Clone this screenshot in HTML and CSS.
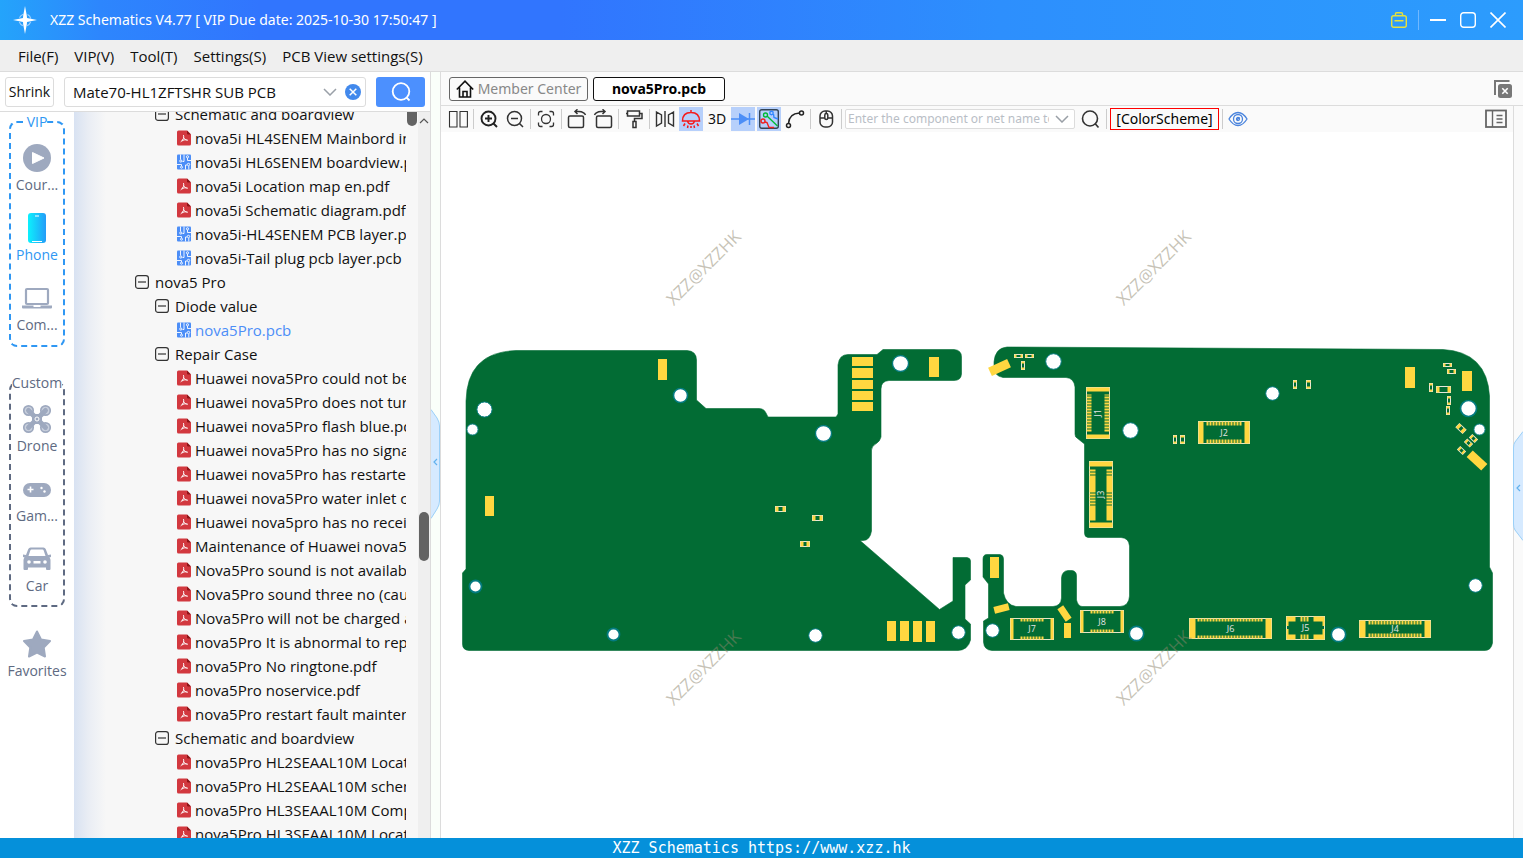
FILE: index.html
```html
<!DOCTYPE html>
<html lang="en">
<head>
<meta charset="utf-8">
<title>XZZ Schematics</title>
<link rel="stylesheet" href="styles.css">
</head>
<body>
<svg class="defs" aria-hidden="true">
  <symbol id="i-pdf" viewBox="0 0 14 16"><path d="M1.5 0.500H10L14 4.500V14Q14 15.500 12.500 15.500H1.500Q0 15.500 0 14V2Q0 .5 1.500 .5Z" fill="#d2383f"/><path d="M10 .5V3.500Q10 4.500 11 4.500H14Z" fill="#8d1519"/><path d="M6.600 5.500C7.300 7.500 6.500 9.500 4 11.600M6.900 8C7.500 9.300 8.800 10 10.500 10.200M5.200 10.800C6.500 9.800 8 9.600 9.300 9.900" fill="none" stroke="#fff" stroke-width="1" stroke-linecap="round"/></symbol>
  <symbol id="i-pcb" viewBox="0 0 14 16"><rect y=".5" width="14" height="15" rx="1" fill="#4c8ef7"/><g fill="none" stroke="#fff" stroke-width=".9"><path d="M3.500 .5V5.500M7 .5V7.500H5.500M10.500 4V6.500H14M0 10.500H4.500V12M8.500 15.500V11H10M11.800 15.500V12"/><circle cx="3.800" cy="7" r="1.100"/><circle cx="10.500" cy="2.800" r="1.100"/><circle cx="11.500" cy="10.500" r="1.200"/><circle cx="4.500" cy="13.200" r="1"/></g></symbol>
  <symbol id="i-minus" viewBox="0 0 14 14"><rect x=".6" y=".6" width="12.800" height="12.800" rx="2.500" fill="none" stroke="#333" stroke-width="1.200"/><path d="M3 7H11" stroke="#333" stroke-width="1.200"/></symbol>
</svg>
<div class="app">
  <header class="titlebar">
    <svg class="logo" viewBox="0 0 24 28"><circle cx="12" cy="14" r="6" fill="none" stroke="#bdf" stroke-width="1.200" stroke-dasharray="5 4.400" stroke-dashoffset="-2" opacity=".8"/><path d="M12 0L13.800 9.500L14 12L24 14L14 16L13.800 18.500L12 28L10.200 18.500L10 16L0 14L10 12L10.200 9.500Z" fill="#fff"/></svg>
    <h1>XZZ Schematics V4.77 [ VIP Due date: 2025-10-30 17:50:47 ]</h1>
    <div class="window-actions">
      <button class="plain" aria-label="Toolbox"><svg width="16" height="16" viewBox="0 0 16 16" fill="none" stroke="#e6e13c" stroke-width="1.400"><rect x=".7" y="3.700" width="14.600" height="11.600" rx="2"/><path d="M4.500 3.500V1.800Q4.500 .7 5.600 .7H10.400Q11.500 .7 11.500 1.800V3.500M3.500 8.700H12.500"/></svg></button>
      <span class="window-divider"></span>
      <button class="plain" aria-label="Minimize"><svg width="16" height="16"><path d="M0 8H16" stroke="#fff" stroke-width="2"/></svg></button>
      <button class="plain" aria-label="Maximize"><svg width="16" height="16"><rect x=".7" y=".7" width="14.600" height="14.600" rx="3" fill="none" stroke="#fff" stroke-width="1.400"/></svg></button>
      <button class="plain" aria-label="Close"><svg width="16" height="16"><path d="M.5 .5L15.500 15.500M15.500 .5L.5 15.500" stroke="#fff" stroke-width="1.600"/></svg></button>
    </div>
  </header>
  <nav class="menubar">
    <button>File(F)</button><button>VIP(V)</button><button>Tool(T)</button><button>Settings(S)</button><button>PCB View settings(S)</button>
  </nav>
  <main class="workspace">
    <section class="browser">
      <form class="search-row">
        <button type="button" class="shrink">Shrink</button>
        <div class="combo">
          <input type="text" aria-label="Search model" value="Mate70-HL1ZFTSHR SUB PCB">
          <svg width="14" height="8" viewBox="0 0 14 8"><path d="M1 1L7 7L13 1" fill="none" stroke="#9aa0a8" stroke-width="1.500"/></svg>
          <button type="button" class="plain" aria-label="Clear"><svg width="16" height="16"><circle cx="8" cy="8" r="8" fill="#4289ec"/><path d="M4.700 4.700L11.300 11.300M11.300 4.700L4.700 11.300" stroke="#fff" stroke-width="1.500"/></svg></button>
        </div>
        <button type="button" class="search-button" aria-label="Search"><svg width="20" height="20" fill="none" stroke="#fff" stroke-width="1.800"><circle cx="10" cy="9.500" r="8.300"/><path d="M15.500 15.500L18.500 18.500"/></svg></button>
      </form>
      <div class="browser-body">
        <aside class="categories">
          <fieldset class="group vip"><legend>VIP</legend>
            <button><svg viewBox="0 0 28 30"><circle cx="14" cy="15" r="14" fill="#9ea9bf"/><path d="M9.500 9.500V20.500L21 15Z" fill="#fff" stroke="#fff" stroke-width="1" stroke-linejoin="round"/></svg><span>Cour...</span></button>
            <button class="active"><svg viewBox="0 0 28 30"><defs><linearGradient id="pg"><stop stop-color="#0cf1fd"/><stop offset="1" stop-color="#249cf8"/></linearGradient></defs><rect x="5" y="0" width="18" height="30" rx="3" fill="url(#pg)"/><path d="M12 3H16M9 28.500H19" stroke="#fff" stroke-width="1.200"/></svg><span>Phone</span></button>
            <button><svg viewBox="0 0 30 30" class="wide"><rect x="4" y="6" width="22" height="15" fill="none" stroke="#9ea9bf" stroke-width="2.200" rx="1"/><path d="M0 22.500H11.500V24H18.500V22.500H30V24.500Q30 25.500 29 25.500H1Q0 25.500 0 24.500Z" fill="#9ea9bf"/></svg><span>Com...</span></button>
          </fieldset>
          <fieldset class="group custom"><legend>Custom</legend>
            <button><svg viewBox="0 0 28 30"><g fill="none" stroke="#9ea9bf"><g fill="#c9d0dd" stroke-width="1.700"><circle cx="5.500" cy="6.500" r="4.700"/><circle cx="22.500" cy="6.500" r="4.700"/><circle cx="5.500" cy="23.500" r="4.700"/><circle cx="22.500" cy="23.500" r="4.700"/></g><path d="M5.500 6.500L22.500 23.500M22.500 6.500L5.500 23.500" stroke-width="5" stroke-linecap="round"/></g><rect x="9" y="10" width="10" height="10" rx="2" fill="#9ea9bf"/><circle cx="14" cy="15" r="2" fill="#9ea9bf" stroke="#fff"/></svg><span>Drone</span></button>
            <button><svg viewBox="0 0 28 30"><rect y="9" width="28" height="14" rx="7" fill="#9ea9bf"/><path d="M4.500 15.500H10.500M7.500 12.500V18.500" stroke="#fff" stroke-width="1.600"/><circle cx="18.500" cy="14" r="1.200" fill="#fff"/><circle cx="21.500" cy="17.500" r="1.200" fill="#fff"/></svg><span>Gam...</span></button>
            <button><svg viewBox="0 0 28 30"><path d="M7.500 3.500H20.500Q22 3.500 22.700 5L25 11L28 10.500V13L26.500 13.500Q27.500 14.500 27.500 16V25Q27.500 26 26.500 26H24Q23 26 23 25V23.500H5V25Q5 26 4 26H1.500Q.5 26 .5 25V16Q.5 14.500 1.500 13.500L0 13V10.500L3 11L5.300 5Q6 3.500 7.500 3.500Z" fill="#9ea9bf"/><path d="M8.500 5.500H19.500Q20.300 5.500 20.700 6.500L22.500 12H5.500L7.300 6.500Q7.700 5.500 8.500 5.500ZM10.500 17H17.500V19.500H10.500Z" fill="#fff"/><circle cx="6" cy="18" r="1.800" fill="#fff"/><circle cx="22" cy="18" r="1.800" fill="#fff"/></svg><span>Car</span></button>
          </fieldset>
          <button class="favorites"><svg viewBox="0 0 28 30"><path d="M14 2.500L18 10.500L27 12L20.700 18.500L22 27.500L14 23.500L6 27.500L7.300 18.500L1 12L10 10.500Z" fill="#9ea9bf" stroke="#9ea9bf" stroke-width="2" stroke-linejoin="round"/></svg><span>Favorites</span></button>
        </aside>
        <div class="tree-pane">
          <div class="tree-clip"><ul class="tree" id="tree"></ul></div>
          <div class="outer-scroll"><span></span></div>
          <div class="inner-scroll"><svg width="10" height="6"><path d="M1 5L5 1L9 5" fill="none" stroke="#555" stroke-width="1.200"/></svg><span></span></div>
        </div>
      </div>
    </section>
    <div class="splitter"><button class="fold fold-left" aria-label="Collapse file list"><svg width="9" height="110" viewBox="0 0 9 110"><path d="M0 .5L6 9Q8.500 13 8.500 17V92Q8.500 96 6 100L0 109.500" fill="#d6eaff" stroke="#9bd0f8"/><path d="M6 50L3 53L6 56" fill="none" stroke="#62b2ee" stroke-width="1.200"/></svg></button></div>
    <section class="viewer">
      <div class="tabs">
        <button class="tab member"><svg width="18" height="18" fill="none" stroke="#111" stroke-width="1.600"><path d="M.8 9.500L9 1.200L17.200 9.500M3.500 7.500V17H14.500V7.500M7 17V11.500H11V17"/></svg>Member Center</button>
        <button class="tab current">nova5Pro.pcb</button>
        <button class="plain close-all" aria-label="Close all tabs"><svg width="18" height="18"><path d="M1 15V1H15.500" fill="none" stroke="#777" stroke-width="2"/><rect x="4" y="4" width="14" height="14" rx="2.500" fill="#777"/><path d="M8.300 8.300L13.700 13.700M13.700 8.300L8.300 13.700" stroke="#fff" stroke-width="1.600"/></svg></button>
      </div>
      <div class="stage">
        <div class="stage-main">
          <div class="toolbar">
            <button aria-label="Split view"><svg width="20" height="20" fill="none" stroke="#333" stroke-width="1.100"><path d="M1.500 2.500H9V18H1.500ZM12 2.500H19.400V18H12Z"/></svg></button><i></i>
            <button aria-label="Zoom in"><svg width="20" height="20" fill="none" stroke="#222" stroke-width="1.900"><circle cx="9.500" cy="9.500" r="7"/><path d="M14.500 14.500L18 18M6 9.500H13M9.500 6V13"/></svg></button>
            <button aria-label="Zoom out"><svg width="20" height="20" fill="none" stroke="#333" stroke-width="1.500"><circle cx="9.500" cy="9.500" r="7"/><path d="M14.500 14.500L18 18M6 9.500H13"/></svg></button><i></i>
            <button aria-label="Fit"><svg width="20" height="20" fill="none" stroke="#333" stroke-width="1.300"><path d="M2.500 6.500V4.500Q2.500 2.500 4.500 2.500H6.500M13.500 2.500H15.500Q17.500 2.500 17.500 4.500V6.500M17.500 13.500V15.500Q17.500 17.500 15.500 17.500H13.500M6.500 17.500H4.500Q2.500 17.500 2.500 15.500V13.500"/><circle cx="10" cy="10" r="4.500"/></svg></button><i></i>
            <button aria-label="Rotate left"><svg width="20" height="20" fill="none" stroke="#333" stroke-width="1.500"><rect x="1.500" y="7" width="15" height="11.500" rx="1.500"/><path d="M18.500 6Q17 2.800 12 2.500H8M10.500 .3L8 2.500L10.500 5"/></svg></button>
            <button aria-label="Rotate right"><svg width="20" height="20" fill="none" stroke="#333" stroke-width="1.500"><rect x="3.500" y="7" width="15" height="11.500" rx="1.500"/><path d="M1.500 6Q3 2.800 8 2.500H12M9.500 .3L12 2.500L9.500 5"/></svg></button><i></i>
            <button aria-label="Paint"><svg width="20" height="20" fill="none" stroke="#333" stroke-width="1.500"><path d="M3.500 2H15.500V7H3.500ZM15.500 4.500H18V9.500H10.500V12.500M3.500 4.500H2"/><rect x="9" y="12.500" width="3" height="6"/></svg></button><i></i>
            <button aria-label="Mirror"><svg width="20" height="20" fill="none" stroke="#333" stroke-width="1.400"><path d="M1.500 3L6.500 6V14L1.500 17ZM18.500 3L13.500 6V14L18.500 17ZM10 2V18"/></svg></button>
            <button class="on" aria-label="Lamp"><svg width="20" height="20" fill="none" stroke="#f51a1a" stroke-width="1.500"><path d="M10 1V3.500M1.500 12Q1.500 3.500 10 3.500T18.500 12ZM6.500 12Q7 15 10 15T13.500 12M4 14.500L2.500 17M16 14.500L17.500 17M7 16.500L6.500 19M13 16.500L13.500 19M10 17V19"/></svg></button>
            <button class="text-tool">3D</button>
            <button class="on" aria-label="Diode"><svg width="24" height="20"><path d="M0 10H24M18.500 4V16" stroke="#4c8ef7" stroke-width="1.500"/><path d="M8 4L18 10L8 16Z" fill="#4c8ef7"/></svg></button>
            <button class="on" aria-label="Nets"><svg width="20" height="20" fill="none" stroke-width="1.400"><rect x=".7" y=".7" width="18.600" height="18.600" rx="2" stroke="#345"/><path d="M8 7L18.500 17" stroke="#0b3"/><circle cx="6.500" cy="6" r="2" stroke="#0b3"/><path d="M14.500 5L15 8.500L19 10" stroke="#38f"/><circle cx="12.500" cy="4" r="1.700" stroke="#38f"/><path d="M6 13L8 13.500L10 18.500H15" stroke="#e22"/><circle cx="4" cy="12" r="2" stroke="#e22"/></svg></button>
            <button aria-label="Trace"><svg width="20" height="20" fill="none" stroke="#222" stroke-width="1.500"><circle cx="3.500" cy="16.500" r="2"/><circle cx="16.500" cy="4" r="2"/><path d="M3.500 14.500Q4 4.500 14.500 4"/></svg></button><i></i>
            <button aria-label="Mouse"><svg width="20" height="20" fill="none" stroke="#333" stroke-width="1.500"><rect x="4" y="2" width="12.500" height="16" rx="5"/><path d="M4 9H16.500M10.250 2V5"/><rect x="8.800" y="4.500" width="3" height="6" rx="1.500" fill="#fafafa"/></svg></button><i></i>
            <div class="net-search"><input type="text" aria-label="Component or net name" placeholder="Enter the component or net name to search"><svg width="14" height="8" viewBox="0 0 14 8"><path d="M1 1L7 7L13 1" fill="none" stroke="#999fa6" stroke-width="1.500"/></svg></div>
            <button aria-label="Find"><svg width="20" height="20" fill="none" stroke="#333" stroke-width="1.600"><circle cx="9" cy="9.500" r="7.500"/><path d="M14 14.500L17.500 18.500"/></svg></button><i></i>
            <button class="scheme">[ColorScheme]</button><i></i>
            <button aria-label="Show"><svg width="20" height="20" fill="none" stroke="#4a84dd" stroke-width="1.300"><path d="M1 10Q5 3.500 10 3.500T19 10Q15 16.500 10 16.500T1 10Z"/><circle cx="10" cy="10" r="4.500"/><path d="M8.500 11L11.500 8.500"/><circle cx="10" cy="10" r="1.500"/></svg></button>
            <button class="side-toggle" aria-label="Side panel"><svg width="22" height="20" fill="none" stroke="#666"><rect x="1" y="1.500" width="20" height="16.500" stroke-width="1.800"/><path d="M7.500 2V18M11.500 6.500H17.500M11.500 10H17.500M11.500 13.500H17.500" stroke-width="1.400"/></svg></button>
          </div>
          <div class="canvas">
            <svg id="board" viewBox="441 132 1072 706" role="img" aria-label="nova5Pro board view">
              <g fill="#026c34" stroke="#026c34" stroke-width=".6">
                <path d="M516 350.500H687Q696.500 351 696.500 360V400L706 408.500H759Q764 408.500 766 413L768 417H836L838 414V365Q839 354.500 848 354.500H877L883 349.500H954Q961.500 350 961.500 357V374Q961 380.500 954 380.500H889Q881 381 881 389V437Q880 441 877 443Q871.500 446 871.500 450V531Q870 540.500 863 540.500H860L939.500 609.500L953 601V557.500H967Q970.500 558 970.500 561V580L965 585V619L970.500 624V640Q968 650 958 650.500H469Q462.500 650 462.500 644V573L466 569V401Q467 352 516 350.500Z"/>
                <path d="M1007 347L1443 349.500Q1487 352 1489.500 396V567L1492.500 573V643Q1491 651 1484 650.500H992Q984 650 983.500 642V621L988.500 618V584L983 577V559Q983 554.500 987 554.500H1000Q1003.500 555 1003.500 559V593Q1006 605 1016 606.500H1053Q1061 606 1061.500 598V578Q1062 571 1068 570.500H1072Q1076.500 571 1076.500 576V600Q1078 606 1082 606.500H1120Q1129 606 1129.500 596V546Q1129 538 1121 537.500H1088Q1084.500 537 1084.500 533V444L1077 438Q1075 437 1075 434V387Q1074 378 1066 377.500H1003Q994 376 994 367V362Q995 348 1007 347Z"/>
              </g>
              <g id="holes" fill="#fff" stroke="#047b80"></g>
              <g id="pads" fill="#ffd740"></g>
              <g id="chips"></g>
              <g id="connectors"></g>
              <g class="mark"><text transform="translate(708 272) rotate(-45)">XZZ@XZZHK</text><text transform="translate(1158 272) rotate(-45)">XZZ@XZZHK</text><text transform="translate(708 672) rotate(-45)">XZZ@XZZHK</text><text transform="translate(1158 672) rotate(-45)">XZZ@XZZHK</text></g>
            </svg>
          </div>
        </div>
        <div class="right-strip"><button class="fold fold-right" aria-label="Expand panel"><svg width="10" height="110" viewBox="0 0 10 110"><path d="M10 .5L2 11Q.5 13 .5 17V93Q.5 97 2 99L10 109.500" fill="#d6eaff" stroke="#9bd0f8"/><path d="M7 54L4 57L7 60" fill="none" stroke="#62b2ee" stroke-width="1.200"/></svg></button></div>
      </div>
    </section>
  </main>
  <footer class="statusbar">XZZ Schematics https://www.xzz.hk</footer>
</div>
<script src="app.js"></script>
</body>
</html>
```
FILE: styles.css
```css
* { box-sizing: border-box; }
body { margin: 0; font: 15px/20px "Open Sans", "Noto Sans", sans-serif; color: #111; }
button, input { font: inherit; color: inherit; }
button { border: 0; background: none; padding: 0; cursor: pointer; white-space: nowrap; }
svg { display: block; flex: none; }
.defs { display: none; }
.app { height: 100vh; display: flex; flex-direction: column; overflow: hidden; }
.titlebar { height: 40px; flex: none; display: flex; align-items: center; padding: 0 17px 0 13px; color: #fff; background: linear-gradient(90deg, #24a4fb 0, #2d86fd 100px, #3175fe 260px, #3175fe 560px, #2d8ffd 1000px, #2c9cfd 100%); }
.logo { width: 24px; height: 28px; }
.titlebar h1 { margin: 0 0 0 13px; font: 400 14px/20px "Noto Sans", "Open Sans", sans-serif; }
.window-actions { margin-left: auto; display: flex; align-items: center; gap: 14px; }
.window-divider { width: 1px; height: 20px; margin: 0 -3px; background: #70b8ff; }
.plain { display: flex; align-items: center; justify-content: center; }
.menubar { flex: none; height: 32px; display: flex; align-items: center; gap: 16px; padding: 0 18px; background: #efefef; border-bottom: 1px solid #dcdcdc; }
.workspace { flex: 1; min-height: 0; display: flex; }
.browser { width: 431px; flex: none; display: flex; flex-direction: column; border-right: 1px solid #dcdcdc; }
.search-row { height: 40px; flex: none; display: flex; align-items: center; padding: 0 5px; border-bottom: 1px solid #dcdcdc; background: #fff; }
.shrink { width: 49px; height: 30px; border: 1px solid #dcdcdc; border-radius: 3px; font-size: 14px; }
.combo { flex: 1; min-width: 0; height: 30px; display: flex; align-items: center; gap: 8px; margin: 0 10px; padding: 0 4px 0 8px; border: 1px solid #dcdcdc; border-radius: 3px; }
.combo input { flex: 1; min-width: 0; border: 0; padding: 0; outline: 0; background: none; }
.search-button { width: 49px; height: 30px; display: flex; align-items: center; justify-content: center; border-radius: 3px; background: #4c90fe; }
.browser-body { flex: 1; min-height: 0; display: flex; }
.categories { width: 74px; flex: none; padding: 0 9px; background: #fff; font-size: 14px; color: #5e6a82; }
.group { min-width: 0; margin: 0; padding: 7px 0 0; border: 2px dashed #5e6a82; border-radius: 8px; }
.group legend { margin: 0 auto; padding: 0; line-height: 20px; }
.vip { border-color: #2f97f3; height: 235px; }
.vip legend { color: #2f97f3; }
.custom { margin-top: 26px; height: 234px; }
.group button, .favorites { width: 100%; height: 70px; display: flex; flex-direction: column; align-items: center; gap: 2px; color: #5e6a82; }
.group button { padding-top: 4px; }
.group svg, .favorites svg { width: 28px; height: 30px; }
.group svg.wide { width: 30px; }
.group .active { color: #2f97f3; }
.favorites { margin-top: 22px; }
.tree-pane { flex: 1; min-width: 0; display: flex; background: linear-gradient(90deg, #d8e2f2 0, #e9edf4 14px, #f7f7f7 32px); }
.tree-clip { flex: 1; min-width: 0; overflow: hidden; }
.tree { list-style: none; margin: -10px 0 0; padding: 0; }
.tree li { height: 24px; display: flex; align-items: center; gap: 4px; padding-left: 103px; white-space: nowrap; }
.tree li.level-1 { padding-left: 61px; }
.tree li.level-2 { padding-left: 81px; }
.tree li.level-1, .tree li.level-2 { gap: 6px; }
.tree a { color: #111; text-decoration: none; }
.tree a.selected { color: #4c8ef7; }
.outer-scroll { width: 12px; padding-left: 1px; }
.outer-scroll span { display: block; width: 10px; height: 14px; border-radius: 0 0 5px 5px; background: #636363; }
.inner-scroll { width: 12px; background: #efefef; padding: 6px 1px 0; }
.inner-scroll span { display: block; width: 10px; height: 49px; margin-top: 388px; border-radius: 5px; background: #636363; }
.splitter { width: 10px; flex: none; position: relative; background: #fafffa; border-right: 1px solid #dcdcdc; }
.fold { position: absolute; }
.fold-left { left: 0; top: 337px; }
.viewer { flex: 1; min-width: 0; display: flex; flex-direction: column; }
.tabs { height: 34px; flex: none; display: flex; align-items: center; gap: 5px; padding: 0 11px 0 8px; background: #fafafa; border-bottom: 1px solid #dcdcdc; font-family: "Noto Sans", "Open Sans", sans-serif; font-size: 14px; }
.tab { height: 24px; display: flex; align-items: center; justify-content: center; gap: 4px; border: 1px solid #666; border-radius: 3px; }
.member { width: 139px; color: #888; }
.current { width: 132px; border-color: #111; font-weight: 700; color: #000; background: #fff; }
.close-all { margin-left: auto; }
.stage { flex: 1; min-height: 0; display: flex; }
.stage-main { flex: 1; min-width: 0; display: flex; flex-direction: column; }
.toolbar { height: 26px; flex: none; display: flex; align-items: center; gap: 2px; padding: 0 5px; background: #fafafa; font-family: "Noto Sans", "Open Sans", sans-serif; font-size: 14px; }
.toolbar button { width: 24px; height: 24px; flex: none; display: flex; align-items: center; justify-content: center; }
.toolbar i { width: 1px; height: 20px; margin: 0 1px; background: #ccc; }
.toolbar .on { background: #b7d0fb; }
.toolbar .scheme { width: 109px; height: 22px; border: 1px solid #f00; color: #000; }
.toolbar .side-toggle { margin-left: auto; }
.net-search { width: 230px; height: 20px; display: flex; align-items: center; gap: 6px; margin-right: 2px; padding: 0 5px 0 2px; border: 1px solid #dcdcdc; border-radius: 2px; font-size: 12px; background: #fff; }
.net-search input { flex: 1; min-width: 0; border: 0; padding: 0; outline: 0; background: none; height: 18px; }
.net-search input::placeholder { color: #b9bec6; }
.canvas { flex: 1; min-height: 0; background: #fff; }
.canvas svg { width: 100%; height: 100%; }
.mark { font-size: 17px; fill: #8e866e; fill-opacity: .5; text-anchor: middle; }
.ref { font-size: 9px; fill: #e4e4e4; text-anchor: middle; }
.right-strip { width: 10px; flex: none; position: relative; background: #fafafa; border-left: 1px solid #dcdcdc; }
.fold-right { right: 0; top: 325px; }
.statusbar { height: 20px; flex: none; background: #0590da; color: #fff; text-align: center; font: 15px/20px "DejaVu Sans Mono", monospace; }
```
FILE: app.js
```js
const rows = [
  [2, 'Schematic and boardview'],
  ['pdf', 'nova5i HL4SENEM Mainbord image.pdf'],
  ['pcb', 'nova5i HL6SENEM boardview.pcb'],
  ['pdf', 'nova5i Location map en.pdf'],
  ['pdf', 'nova5i Schematic diagram.pdf'],
  ['pcb', 'nova5i-HL4SENEM PCB layer.pcb'],
  ['pcb', 'nova5i-Tail plug pcb layer.pcb'],
  [1, 'nova5 Pro'],
  [2, 'Diode value'],
  ['pcb', 'nova5Pro.pcb', true],
  [2, 'Repair Case'],
  ['pdf', 'Huawei nova5Pro could not be'],
  ['pdf', 'Huawei nova5Pro does not turn on.pdf'],
  ['pdf', 'Huawei nova5Pro flash blue.pdf'],
  ['pdf', 'Huawei nova5Pro has no signal.pdf'],
  ['pdf', 'Huawei nova5Pro has restarted'],
  ['pdf', 'Huawei nova5Pro water inlet could.pdf'],
  ['pdf', 'Huawei nova5pro has no receiver.pdf'],
  ['pdf', 'Maintenance of Huawei nova5Pro.pdf'],
  ['pdf', 'Nova5Pro sound is not available.pdf'],
  ['pdf', 'Nova5Pro sound three no (caused.pdf'],
  ['pdf', 'Nova5Pro will not be charged and.pdf'],
  ['pdf', 'nova5Pro It is abnormal to replace.pdf'],
  ['pdf', 'nova5Pro No ringtone.pdf'],
  ['pdf', 'nova5Pro noservice.pdf'],
  ['pdf', 'nova5Pro restart fault maintenance.pdf'],
  [2, 'Schematic and boardview'],
  ['pdf', 'nova5Pro HL2SEAAL10M Location.pdf'],
  ['pdf', 'nova5Pro HL2SEAAL10M schematic.pdf'],
  ['pdf', 'nova5Pro HL3SEAAL10M Component.pdf'],
  ['pdf', 'nova5Pro HL3SEAAL10M Location.pdf'],
];
document.getElementById('tree').innerHTML = rows.map(([kind, name, selected]) =>
  typeof kind === 'number'
    ? `<li class="level-${kind}"><button aria-label="Collapse ${name}"><svg width="14" height="14"><use href="#i-minus"/></svg></button><span>${name}</span></li>`
    : `<li><svg width="14" height="16"><use href="#i-${kind}"/></svg><a href="#"${selected ? ' class="selected"' : ''}>${name}</a></li>`
).join('');

const put = (id, html) => { document.getElementById(id).innerHTML = html; };

// x, y, radius, ring width
put('holes', [
  [484.5, 409.5, 7.6, 1], [472.5, 429.5, 5.6, 1], [680.5, 395.5, 7, 1.6], [475.5, 586.5, 6, 1.8],
  [613.5, 634.5, 6, 1.8], [823.5, 433.5, 8, 1.3], [900.5, 363.5, 8, 1.3], [815.5, 635.5, 6.8, 1],
  [958.5, 632.5, 6.8, 1], [1053.5, 361.5, 7.8, 1], [1130.5, 430.5, 7.8, 1], [992.5, 630.5, 6.8, 1],
  [1136.5, 633.5, 7.2, 1.7], [1272.5, 393.5, 6.8, 1], [1468.5, 408.5, 8, 1.7], [1479.5, 429.5, 5.6, 1],
  [1475.5, 585.5, 6.8, 1], [1338.5, 634.5, 7.2, 1.7],
].map(([x, y, r, w]) => `<circle cx="${x}" cy="${y}" r="${r}" stroke-width="${w}"/>`).join(''));

// x, y, width, height, rotation
put('pads', [
  [658, 359, 9, 21], [485, 496, 9, 20], [852, 357, 21, 9], [852, 368, 21, 10], [852, 380, 21, 9],
  [852, 391, 21, 9], [852, 402, 21, 9], [929, 357, 10, 20], [887, 621, 9, 20], [900, 621, 9, 20],
  [913, 621, 9, 21], [926, 621, 9, 21], [990, 557, 9, 21], [1064, 623, 7, 15], [1405, 367, 10, 21],
  [1462, 371, 10, 20], [989, 363, 21, 9, -25], [994, 605, 15, 7, -14], [1061, 606, 7, 15, -34],
  [1467, 456, 20, 9, 43],
].map(([x, y, w, h, a = 0]) => `<rect x="${x}" y="${y}" width="${w}" height="${h}" transform="rotate(${a} ${x + w / 2} ${y + h / 2})"/>`).join(''));

// centre x, centre y, width, height, rotation
put('chips', [
  [780.5, 509, 10, 5], [817.5, 518, 10, 5], [805, 544, 9, 5], [1018.5, 356, 8, 3], [1029.5, 356, 8, 3],
  [1023, 365.5, 8, 3, 90], [1175, 439.5, 8, 3, 90], [1182.5, 439.5, 8, 4, 90], [1295, 384.5, 8, 3, 90],
  [1308.5, 384.5, 8, 4, 90], [1447.5, 365, 8, 3], [1451.5, 371.5, 8, 4], [1431, 387.5, 8, 3, 90],
  [1443.5, 389.5, 14, 6], [1449, 400.5, 8, 3, 90], [1448, 410.5, 8, 3, 90], [1461, 428.5, 9, 5, 43],
  [1473.5, 438.5, 7, 4, 43], [1468.5, 443, 7, 4, 43], [1461.5, 450.5, 7, 4, 43],
].map(([x, y, w, h, a = 0]) => {
  const pad = w > 8 ? 3 : 2;
  return `<g transform="translate(${x} ${y}) rotate(${a})"><rect x="${-w / 2}" y="${-h / 2}" width="${w}" height="${h}" fill="#026c34" stroke="#e6e8dc" stroke-width="1"/><path d="M${-w / 2 + pad / 2} ${-h / 2}V${h / 2}M${w / 2 - pad / 2} ${-h / 2}V${h / 2}" stroke="#ffd740" stroke-width="${pad}"/></g>`;
}).join(''));

// name, centre x, centre y, length, breadth, end pad, pin length, pin margin, dash pattern, rotation
put('connectors', [
  ['J1', 1098, 413, 51, 23, 4, 5, 7, '2 1', 90],
  ['J2', 1224, 432.5, 51, 22, 5, 4, 8, '2 1', 0],
  ['J3', 1101, 494.5, 66, 23, 5, 6, 7, '15 1 2 1 2 1 2 1 2 1 17 1 2 1 2 99', 90],
  ['J7', 1032, 629, 43, 21, 3, 3, 10, '2 1', 0],
  ['J8', 1102, 621.5, 43, 22, 3, 3, 10, '2 1', 0],
  ['J6', 1230.5, 628.5, 82, 20, 6, 3, 8, '2 1', 0],
  ['J5', 1305.5, 628, 38, 23, 0, 5, 0, '9 5 2 1 2 1 2 5 11 99', 0],
  ['J4', 1395, 629, 71, 17, 6, 4, 9, '2 1', 0],
].map(([name, x, y, w, h, end, pin, gap, dash, a]) => {
  const l = -w / 2, t = -h / 2;
  const sides = name === 'J5' ? `<path d="M${l + 1} -7V-2M${l + 1} 1V7M${-l - 1} -7V-2M${-l - 1} 1V7" stroke="#ffd740" stroke-width="2"/>` : '';
  return `<g transform="translate(${x} ${y}) rotate(${a === 90 ? -90 : 0})"><rect x="${l}" y="${t}" width="${w}" height="${h}" fill="none" stroke="#e4e6c8" stroke-width="1"/>
  <path d="M${l} ${t}h${end}v${h}h${-end}ZM${-l} ${t}h${-end}v${h}h${end}Z" fill="#ffd740"/>
  <path d="M${l + gap} ${t + pin / 2}H${-l - gap}M${l + gap} ${-t - pin / 2}H${-l - gap}" stroke="#ffd740" stroke-width="${pin}" stroke-dasharray="${dash}"/>${sides}
  <text class="ref" y="3">${name}</text></g>`;
}).join(''));
```
